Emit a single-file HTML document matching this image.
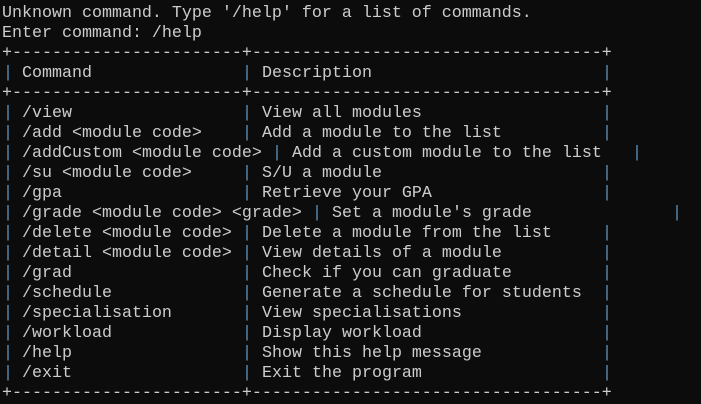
<!DOCTYPE html>
<html><head><meta charset="utf-8"><style>
html,body{margin:0;padding:0;background:#0c0c0c;width:701px;height:402px;overflow:hidden}
div{position:absolute;left:0;height:20px;width:701px}
span{position:absolute;top:0;font-family:"Liberation Mono",monospace;font-size:16.67px;line-height:20px;color:#cccccc;white-space:pre}
b{position:absolute;top:0;font-weight:normal;font-family:"Liberation Mono",monospace;font-size:16.67px;line-height:20px;color:#5a8fb8}
</style></head><body>
<div style="top:4px"><span style="left:2px">Unknown command. Type '/help' for a list of commands.</span></div>
<div style="top:24px"><span style="left:2px">Enter command: /help</span></div>
<div style="top:44px"><span style="left:2px">+-----------------------+-----------------------------------+</span></div>
<div style="top:64px"><b style="left:3px">|</b><span style="left:22px">Command</span><b style="left:242px">|</b><span style="left:262px">Description</span><b style="left:602px">|</b></div>
<div style="top:84px"><span style="left:2px">+-----------------------+-----------------------------------+</span></div>
<div style="top:104px"><b style="left:3px">|</b><span style="left:22px">/view</span><b style="left:242px">|</b><span style="left:262px">View all modules</span><b style="left:602px">|</b></div>
<div style="top:124px"><b style="left:3px">|</b><span style="left:22px">/add &lt;module code&gt;</span><b style="left:242px">|</b><span style="left:262px">Add a module to the list</span><b style="left:602px">|</b></div>
<div style="top:144px"><b style="left:3px">|</b><span style="left:22px">/addCustom &lt;module code&gt;</span><b style="left:272px">|</b><span style="left:292px">Add a custom module to the list</span><b style="left:632px">|</b></div>
<div style="top:164px"><b style="left:3px">|</b><span style="left:22px">/su &lt;module code&gt;</span><b style="left:242px">|</b><span style="left:262px">S/U a module</span><b style="left:602px">|</b></div>
<div style="top:184px"><b style="left:3px">|</b><span style="left:22px">/gpa</span><b style="left:242px">|</b><span style="left:262px">Retrieve your GPA</span><b style="left:602px">|</b></div>
<div style="top:204px"><b style="left:3px">|</b><span style="left:22px">/grade &lt;module code&gt; &lt;grade&gt;</span><b style="left:312px">|</b><span style="left:332px">Set a module's grade</span><b style="left:672px">|</b></div>
<div style="top:224px"><b style="left:3px">|</b><span style="left:22px">/delete &lt;module code&gt;</span><b style="left:242px">|</b><span style="left:262px">Delete a module from the list</span><b style="left:602px">|</b></div>
<div style="top:244px"><b style="left:3px">|</b><span style="left:22px">/detail &lt;module code&gt;</span><b style="left:242px">|</b><span style="left:262px">View details of a module</span><b style="left:602px">|</b></div>
<div style="top:264px"><b style="left:3px">|</b><span style="left:22px">/grad</span><b style="left:242px">|</b><span style="left:262px">Check if you can graduate</span><b style="left:602px">|</b></div>
<div style="top:284px"><b style="left:3px">|</b><span style="left:22px">/schedule</span><b style="left:242px">|</b><span style="left:262px">Generate a schedule for students</span><b style="left:602px">|</b></div>
<div style="top:304px"><b style="left:3px">|</b><span style="left:22px">/specialisation</span><b style="left:242px">|</b><span style="left:262px">View specialisations</span><b style="left:602px">|</b></div>
<div style="top:324px"><b style="left:3px">|</b><span style="left:22px">/workload</span><b style="left:242px">|</b><span style="left:262px">Display workload</span><b style="left:602px">|</b></div>
<div style="top:344px"><b style="left:3px">|</b><span style="left:22px">/help</span><b style="left:242px">|</b><span style="left:262px">Show this help message</span><b style="left:602px">|</b></div>
<div style="top:364px"><b style="left:3px">|</b><span style="left:22px">/exit</span><b style="left:242px">|</b><span style="left:262px">Exit the program</span><b style="left:602px">|</b></div>
<div style="top:384px"><span style="left:2px">+-----------------------+-----------------------------------+</span></div>
</body></html>
